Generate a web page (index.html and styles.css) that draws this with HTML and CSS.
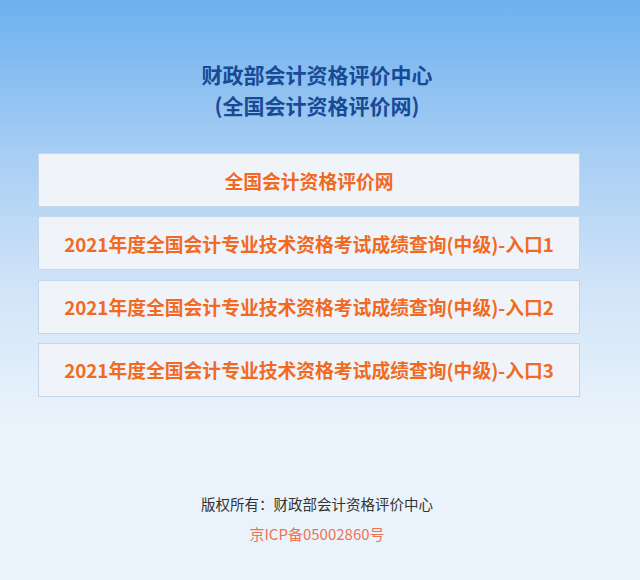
FILE: index.html
```html
<!DOCTYPE html>
<html lang="zh-CN">
<head>
<meta charset="utf-8">
<title>财政部会计资格评价中心</title>
<link rel="stylesheet" href="styles.css">
</head>
<body>
<div class="page">
  <header class="title">
    <div>财政部会计资格评价中心</div>
    <div>(全国会计资格评价网)</div>
  </header>
  <nav class="links">
    <a class="link" href="#">全国会计资格评价网</a>
    <a class="link" href="#">2021年度全国会计专业技术资格考试成绩查询(中级)-入口1</a>
    <a class="link" href="#">2021年度全国会计专业技术资格考试成绩查询(中级)-入口2</a>
    <a class="link" href="#">2021年度全国会计专业技术资格考试成绩查询(中级)-入口3</a>
  </nav>
  <footer class="footer">
    <div class="copy">版权所有：财政部会计资格评价中心</div>
    <div class="icp">京ICP备05002860号</div>
  </footer>
</div>
</body>
</html>
```

FILE: styles.css
```css
html, body {
  margin: 0;
  padding: 0;
  height: 580px;
}
body {
  background: linear-gradient(to bottom, #6db0ef 0px, #a6cdf3 150px, #cfe3f8 280px, #eaf3fb 420px, #eaf3fb 100%);
  font-family: "Noto Sans CJK SC", "Noto Sans", sans-serif;
  overflow: hidden;
}
.page {
  width: 634px;
  padding-top: 59px;
}
.title {
  text-align: center;
  color: #184a95;
  font-size: 21px;
  font-weight: bold;
  line-height: 31px;
}
.links {
  margin-top: 32px;
  margin-left: 38px;
  width: 542px;
  display: flex;
  flex-direction: column;
  gap: 9.3px;
}
.link {
  display: flex;
  align-items: center;
  justify-content: center;
  height: 52px;
  border: 1px solid #c3d6ea;
  background: #f0f4f8;
  color: #f06a24;
  font-size: 18.8px;
  font-weight: bold;
  text-decoration: none;
}
.footer {
  margin-top: 92px;
  text-align: center;
  font-size: 14.5px;
  line-height: 30px;
}
.copy {
  color: #333333;
}
.icp {
  color: #ef7350;
  font-size: 15px;
}
```
